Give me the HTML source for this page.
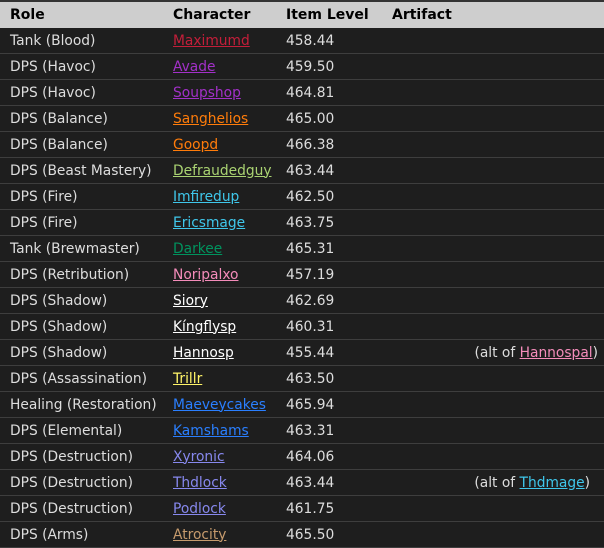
<!DOCTYPE html>
<html><head><style>
html,body{margin:0;padding:0;background:#1e1e1e;width:604px;height:548px;overflow:hidden}
table{border-collapse:collapse;width:604px;font-family:"DejaVu Sans",Verdana,sans-serif;font-size:13.8px;color:#ddd;border-top:2px solid #333}
th{background:#cecece;color:#000;text-align:left;font-weight:bold;height:26px;padding:0 0 0 10px;font-size:14px}
td{height:25px;padding:0 0 0 10px;border-bottom:1px solid #3e3e3e;white-space:nowrap}
td.c,th.c{padding-left:0}
td.r{text-align:right;padding-right:6px}
a{text-decoration:underline}
</style></head><body>
<table>
<tr><th style="width:163px">Role</th><th class="c" style="width:103px">Character</th><th style="width:96px">Item Level</th><th style="padding-left:10px">Artifact</th></tr>
<tr><td>Tank (Blood)</td><td class="c"><a style="color:#c41e3a">Maximumd</a></td><td>458.44</td><td></td></tr>
<tr><td>DPS (Havoc)</td><td class="c"><a style="color:#a330c9">Avade</a></td><td>459.50</td><td></td></tr>
<tr><td>DPS (Havoc)</td><td class="c"><a style="color:#a330c9">Soupshop</a></td><td>464.81</td><td></td></tr>
<tr><td>DPS (Balance)</td><td class="c"><a style="color:#ff7c0a">Sanghelios</a></td><td>465.00</td><td></td></tr>
<tr><td>DPS (Balance)</td><td class="c"><a style="color:#ff7c0a">Goopd</a></td><td>466.38</td><td></td></tr>
<tr><td>DPS (Beast Mastery)</td><td class="c"><a style="color:#aad372">Defraudedguy</a></td><td>463.44</td><td></td></tr>
<tr><td>DPS (Fire)</td><td class="c"><a style="color:#3fc7eb">Imfiredup</a></td><td>462.50</td><td></td></tr>
<tr><td>DPS (Fire)</td><td class="c"><a style="color:#3fc7eb">Ericsmage</a></td><td>463.75</td><td></td></tr>
<tr><td>Tank (Brewmaster)</td><td class="c"><a style="color:#00935e">Darkee</a></td><td>465.31</td><td></td></tr>
<tr><td>DPS (Retribution)</td><td class="c"><a style="color:#f48cba">Noripalxo</a></td><td>457.19</td><td></td></tr>
<tr><td>DPS (Shadow)</td><td class="c"><a style="color:#fff">Siory</a></td><td>462.69</td><td></td></tr>
<tr><td>DPS (Shadow)</td><td class="c"><a style="color:#fff">Kíngflysp</a></td><td>460.31</td><td></td></tr>
<tr><td>DPS (Shadow)</td><td class="c"><a style="color:#fff">Hannosp</a></td><td>455.44</td><td class="r">(alt of <a style="color:#f48cba">Hannospal</a>)</td></tr>
<tr><td>DPS (Assassination)</td><td class="c"><a style="color:#fff468">Trillr</a></td><td>463.50</td><td></td></tr>
<tr><td>Healing (Restoration)</td><td class="c"><a style="color:#2a7fff">Maeveycakes</a></td><td>465.94</td><td></td></tr>
<tr><td>DPS (Elemental)</td><td class="c"><a style="color:#2a7fff">Kamshams</a></td><td>463.31</td><td></td></tr>
<tr><td>DPS (Destruction)</td><td class="c"><a style="color:#8788ee">Xyronic</a></td><td>464.06</td><td></td></tr>
<tr><td>DPS (Destruction)</td><td class="c"><a style="color:#8788ee">Thdlock</a></td><td>463.44</td><td class="r" style="padding-right:14px">(alt of <a style="color:#3fc7eb">Thdmage</a>)</td></tr>
<tr><td>DPS (Destruction)</td><td class="c"><a style="color:#8788ee">Podlock</a></td><td>461.75</td><td></td></tr>
<tr><td>DPS (Arms)</td><td class="c"><a style="color:#c69b6d">Atrocity</a></td><td>465.50</td><td></td></tr>
</table>
</body></html>
